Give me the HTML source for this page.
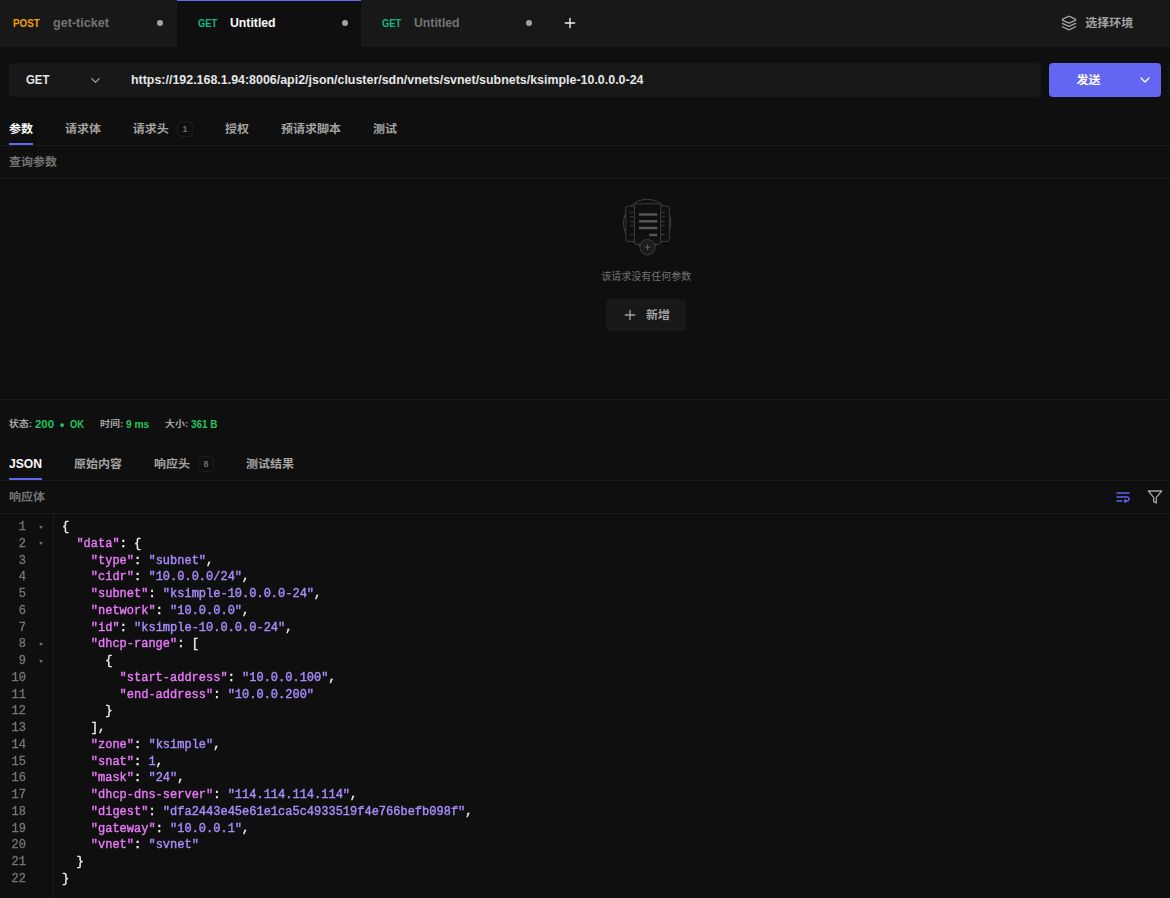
<!DOCTYPE html>
<html lang="zh-CN">
<head>
<meta charset="utf-8">
<title>Hoppscotch</title>
<style>
*{box-sizing:border-box;margin:0;padding:0}
html,body{width:1170px;height:898px;overflow:hidden;background:#0f0f0f}
body{font-family:"Liberation Sans","Noto Sans CJK SC",sans-serif;font-size:12px;color:#a3a3a3;position:relative}
.abs{position:absolute;white-space:nowrap}
#tabbar{position:absolute;left:0;top:0;width:1170px;height:47px;background:#181818}
.tab{position:absolute;top:0;height:47px}
.tab.active{background:#0f0f0f}
.tab.active::before{content:"";position:absolute;left:0;top:0;width:100%;height:1px;background:#6366f1}
.m{position:absolute;font-size:10.6px;font-weight:700;line-height:12px;transform-origin:0 50%}
.n{position:absolute;font-size:13.4px;line-height:16px;color:#737373;font-weight:700;transform-origin:0 50%}
.tab.active .n{color:#fafafa}
.dot{position:absolute;top:20px;width:6px;height:6px;border-radius:50%;background:#a3a3a3}
.get{color:#10b981}.post{color:#f59e0b}
#method{position:absolute;left:9px;top:63px;width:108px;height:34px;background:#181818;border-radius:4px 0 0 4px}
#url{position:absolute;left:117px;top:63px;width:924px;height:34px;background:#181818;border-radius:0 4px 4px 0}
#send{position:absolute;left:1049px;top:63px;width:112px;height:34px;background:#6366f1;border-radius:4px}
.hline{position:absolute;left:0;width:1170px;height:1px;background:#1b1b1b}
.t{position:absolute;white-space:nowrap;line-height:16px}
.cj{transform:scaleY(.91)}
.sub{font-size:12px;font-weight:700;color:#a3a3a3}
.sub.on{color:#fafafa}
.badge{position:absolute;width:16px;height:16px;border:1px solid #1e1e1e;border-radius:4.5px;font-size:8.8px;font-weight:700;line-height:14px;text-align:center;color:#6e6e6e}
.ul{position:absolute;height:2px;background:#6366f1}
.st{font-size:10px;font-weight:700;color:#a3a3a3}
.sv{font-size:10.6px;font-weight:700;color:#22c55e;transform-origin:0 50%}
#gutter{position:absolute;left:0;top:514px;width:54px;height:384px;border-right:1px solid #1b1b1b}
#code{position:absolute;left:0;top:519.4px;width:1170px;font-family:"Liberation Mono",monospace;font-size:12px;line-height:16.76px;white-space:pre;color:#ececec;-webkit-text-stroke:.4px;will-change:transform}
#code .ln{position:absolute;left:0;width:26px;text-align:right;color:#767676;-webkit-text-stroke:.3px}
#code .l{position:absolute;left:62px}
#code .f{position:absolute;left:38.6px;width:0;height:0;border-left:2.5px solid transparent;border-right:2.5px solid transparent;border-top:3.2px solid #707070}
.k{color:#e879f9}.s{color:#a78bfa}
</style>
</head>
<body>
<div id="tabbar">
  <div class="tab" style="left:0;width:177px"><span class="m post" id="post" style="left:13.1px;top:17px;transform:scaleX(.925)">POST</span><span class="n" id="tk" style="left:52.8px;top:15px;transform:scaleX(.94)">get-ticket</span><span class="dot" style="left:157px"></span></div>
  <div class="tab active" style="left:177px;width:184px"><span class="m get" id="get2" style="left:20.6px;top:17px;transform:scaleX(.885)">GET</span><span class="n" id="unt2" style="left:52.9px;top:15px;transform:scaleX(.915)">Untitled</span><span class="dot" style="left:165px"></span></div>
  <div class="tab" style="left:361px;width:184px"><span class="m get" id="get3" style="left:20.6px;top:17px;transform:scaleX(.885)">GET</span><span class="n" id="unt3" style="left:53.0px;top:15px;transform:scaleX(.915)">Untitled</span><span class="dot" style="left:165px"></span></div>
  <svg class="abs" style="left:562px;top:15px" width="16" height="16" viewBox="0 0 24 24" fill="none" stroke="#ededed" stroke-width="2.1" stroke-linecap="round"><path d="M12 5v14M5 12h14"/></svg>
  <svg class="abs" style="left:1061px;top:15px" width="16" height="16" viewBox="0 0 24 24" fill="none" stroke="#a3a3a3" stroke-width="2" stroke-linecap="round" stroke-linejoin="round"><path d="m12.830 2.180a2 2 0 0 0-1.660 0L2.600 6.080a1 1 0 0 0 0 1.830l8.580 3.910a2 2 0 0 0 1.660 0l8.580-3.900a1 1 0 0 0 0-1.830Z"/><path d="m22 17.650-9.170 4.160a2 2 0 0 1-1.660 0L2 17.650"/><path d="m22 12.650-9.170 4.160a2 2 0 0 1-1.660 0L2 12.650"/></svg>
  <span class="t cj" id="env" style="left:1085.200px;top:15.200px;font-weight:700;color:#a3a3a3">选择环境</span>
</div>

<div id="method"></div>
<div id="url"></div>
<span class="t" id="GET" style="left:25.8px;top:72px;font-size:13.200px;font-weight:700;color:#e5e5e5;transform-origin:0 50%;transform:scaleX(.865)">GET</span>
<svg class="abs" style="left:87.500px;top:72.500px" width="15" height="15" viewBox="0 0 24 24" fill="none" stroke="#a3a3a3" stroke-width="2" stroke-linecap="round" stroke-linejoin="round"><path d="m6 9 6 6 6-6"/></svg>
<span class="t" id="urltext" style="left:130.9px;top:72px;font-size:12.300px;font-weight:700;color:#e5e5e5;transform-origin:0 50%;transform:scaleX(1.0105)">https://192.168.1.94:8006/api2/json/cluster/sdn/vnets/svnet/subnets/ksimple-10.0.0.0-24</span>
<div id="send"></div>
<div class="abs" style="left:1169px;top:63px;width:10px;height:34px;background:#181818;border-radius:4px"></div>
<span class="t cj" id="sendt" style="left:1076.500px;top:72.100px;font-weight:700;color:#fff">发送</span>
<svg class="abs" style="left:1137px;top:72px" width="16" height="16" viewBox="0 0 24 24" fill="none" stroke="#fff" stroke-width="2" stroke-linecap="round" stroke-linejoin="round"><path d="m6 9 6 6 6-6"/></svg>

<span class="t sub on cj" id="s1" style="left:9px;top:120.700px">参数</span>
<span class="t sub cj" id="s2" style="left:65px;top:120.700px">请求体</span>
<span class="t sub cj" id="s3" style="left:132.700px;top:120.700px">请求头</span>
<span class="badge" id="b1" style="left:177px;top:121px">1</span>
<span class="t sub cj" id="s4" style="left:225px;top:120.700px">授权</span>
<span class="t sub cj" id="s5" style="left:281px;top:120.700px">预请求脚本</span>
<span class="t sub cj" id="s6" style="left:373px;top:120.700px">测试</span>
<div class="ul" style="left:9px;top:143px;width:24px"></div>
<div class="hline" style="top:145px"></div>
<span class="t cj" id="qp" style="left:9px;top:154.100px;color:#737373;font-weight:700">查询参数</span>
<div class="hline" style="top:178px"></div>

<svg class="abs" style="left:607px;top:190px" width="80" height="70" viewBox="0 0 80 70" fill="none" stroke="#3d3d3d" stroke-width="1">
  <circle cx="40.200" cy="33" r="23.700"/>
  <rect x="18.800" y="16.100" width="43.500" height="35.300" rx="2.200" fill="#0f0f0f"/>
  <rect x="27.400" y="13.800" width="26.300" height="40.300" rx="2.200" fill="#0f0f0f"/>
  <path d="M22.800 22.600h4.100M22.800 26.900h4.100M22.800 31.600h4.100M22.800 35.700h4.100M22.800 44.600h4.100M54.200 22.600h4M54.200 26.900h4M54.200 31.600h4M54.200 35.700h4M54.200 44.600h4" stroke="#3a3a3a"/>
  <path d="M32 24.600h18.300M32 31.200h18.300M32 38h18.300M42.300 45h8" stroke="#555" stroke-width="2.500"/>
  <circle cx="40.500" cy="57.200" r="7.700" fill="#1c1c1c"/>
  <path d="M37.700 57.200h5.600M40.500 54.400v5.600" stroke="#5c5c5c" stroke-width="1.100"/>
</svg>
<span class="t" id="empty" style="left:601.300px;top:268.500px;font-size:10px;color:#737373">该请求没有任何参数</span>
<div class="abs" style="left:606px;top:299px;width:80px;height:32px;background:#181818;border-radius:4px"></div>
<svg class="abs" style="left:622px;top:307px" width="16" height="16" viewBox="0 0 24 24" fill="none" stroke="#a3a3a3" stroke-width="2" stroke-linecap="round"><path d="M12 5v14M5 12h14"/></svg>
<span class="t cj" id="add" style="left:646px;top:307.300px;font-weight:700;color:#a3a3a3">新增</span>

<div class="hline" style="top:399px"></div>

<span class="t st cj" id="st1" style="left:8.700px;top:416px">状态:</span><span class="t sv" id="st1v" style="left:35.2px;top:416px;transform:scaleX(1.08)">200</span><span class="t sv" id="st1d" style="left:60px;top:417.300px;font-size:12px">•</span><span class="t sv" id="st1k" style="left:69.8px;top:416px;transform:scaleX(.89)">OK</span>
<span class="t st cj" id="st2" style="left:100px;top:416px">时间:</span><span class="t sv" id="st2v" style="left:126.0px;top:416px;transform:scaleX(.96)">9 ms</span>
<span class="t st cj" id="st3" style="left:165px;top:416px">大小:</span><span class="t sv" id="st3v" style="left:190.9px;top:416px;transform:scaleX(.935)">361 B</span>

<span class="t sub on" id="r1" style="left:9.2px;top:456px;font-size:12.500px;font-weight:700;transform-origin:0 50%;transform:scaleX(.97)">JSON</span>
<span class="t sub cj" id="r2" style="left:74px;top:455.600px">原始内容</span>
<span class="t sub cj" id="r3" style="left:154px;top:455.600px">响应头</span>
<span class="badge" id="b8" style="left:198px;top:456px">8</span>
<span class="t sub cj" id="r4" style="left:246px;top:455.600px">测试结果</span>
<div class="ul" style="left:9px;top:478px;width:33px"></div>
<div class="hline" style="top:480px"></div>
<span class="t cj" id="rb" style="left:9px;top:489.300px;color:#737373;font-weight:700">响应体</span>
<svg class="abs" style="left:1115px;top:489px" width="16" height="16" viewBox="0 0 24 24" fill="none" stroke="#6366f1" stroke-width="2" stroke-linecap="round" stroke-linejoin="round"><path d="M3 6h18M3 12h15a3 3 0 1 1 0 6h-4M3 18h7"/><path d="m16 16-2 2 2 2"/></svg>
<svg class="abs" style="left:1147px;top:489px" width="16" height="16" viewBox="0 0 24 24" fill="none" stroke="#a3a3a3" stroke-width="2" stroke-linecap="round" stroke-linejoin="round"><path d="M22 3H2l8 9.460V19l4 2v-8.540L22 3z"/></svg>
<div class="hline" style="top:513px"></div>

<div id="gutter"></div>
<div id="code">
<span class="ln" style="top:0.0px">1</span><span class="f" style="top:6.5px"></span><span class="l" style="top:0.0px">{</span>
<span class="ln" style="top:16.76px">2</span><span class="f" style="top:23.26px"></span><span class="l" style="top:16.76px">  <span class="k">"data"</span>: {</span>
<span class="ln" style="top:33.52px">3</span><span class="l" style="top:33.52px">    <span class="k">"type"</span>: <span class="s">"subnet"</span>,</span>
<span class="ln" style="top:50.28px">4</span><span class="l" style="top:50.28px">    <span class="k">"cidr"</span>: <span class="s">"10.0.0.0/24"</span>,</span>
<span class="ln" style="top:67.04px">5</span><span class="l" style="top:67.04px">    <span class="k">"subnet"</span>: <span class="s">"ksimple-10.0.0.0-24"</span>,</span>
<span class="ln" style="top:83.8px">6</span><span class="l" style="top:83.8px">    <span class="k">"network"</span>: <span class="s">"10.0.0.0"</span>,</span>
<span class="ln" style="top:100.56px">7</span><span class="l" style="top:100.56px">    <span class="k">"id"</span>: <span class="s">"ksimple-10.0.0.0-24"</span>,</span>
<span class="ln" style="top:117.32px">8</span><span class="f" style="top:123.82px"></span><span class="l" style="top:117.32px">    <span class="k">"dhcp-range"</span>: [</span>
<span class="ln" style="top:134.08px">9</span><span class="f" style="top:140.58px"></span><span class="l" style="top:134.08px">      {</span>
<span class="ln" style="top:150.84px">10</span><span class="l" style="top:150.84px">        <span class="k">"start-address"</span>: <span class="s">"10.0.0.100"</span>,</span>
<span class="ln" style="top:167.6px">11</span><span class="l" style="top:167.6px">        <span class="k">"end-address"</span>: <span class="s">"10.0.0.200"</span></span>
<span class="ln" style="top:184.36px">12</span><span class="l" style="top:184.36px">      }</span>
<span class="ln" style="top:201.12px">13</span><span class="l" style="top:201.12px">    ],</span>
<span class="ln" style="top:217.88px">14</span><span class="l" style="top:217.88px">    <span class="k">"zone"</span>: <span class="s">"ksimple"</span>,</span>
<span class="ln" style="top:234.64px">15</span><span class="l" style="top:234.64px">    <span class="k">"snat"</span>: <span class="s">1</span>,</span>
<span class="ln" style="top:251.4px">16</span><span class="l" style="top:251.4px">    <span class="k">"mask"</span>: <span class="s">"24"</span>,</span>
<span class="ln" style="top:268.16px">17</span><span class="l" style="top:268.16px">    <span class="k">"dhcp-dns-server"</span>: <span class="s">"114.114.114.114"</span>,</span>
<span class="ln" style="top:284.92px">18</span><span class="l" style="top:284.92px">    <span class="k">"digest"</span>: <span class="s">"dfa2443e45e61e1ca5c4933519f4e766befb098f"</span>,</span>
<span class="ln" style="top:301.68px">19</span><span class="l" style="top:301.68px">    <span class="k">"gateway"</span>: <span class="s">"10.0.0.1"</span>,</span>
<span class="ln" style="top:318.44px">20</span><span class="l" style="top:318.44px">    <span class="k">"vnet"</span>: <span class="s">"svnet"</span></span>
<span class="ln" style="top:335.2px">21</span><span class="l" style="top:335.2px">  }</span>
<span class="ln" style="top:351.96px">22</span><span class="l" style="top:351.96px">}</span>
</div>
</body>
</html>
